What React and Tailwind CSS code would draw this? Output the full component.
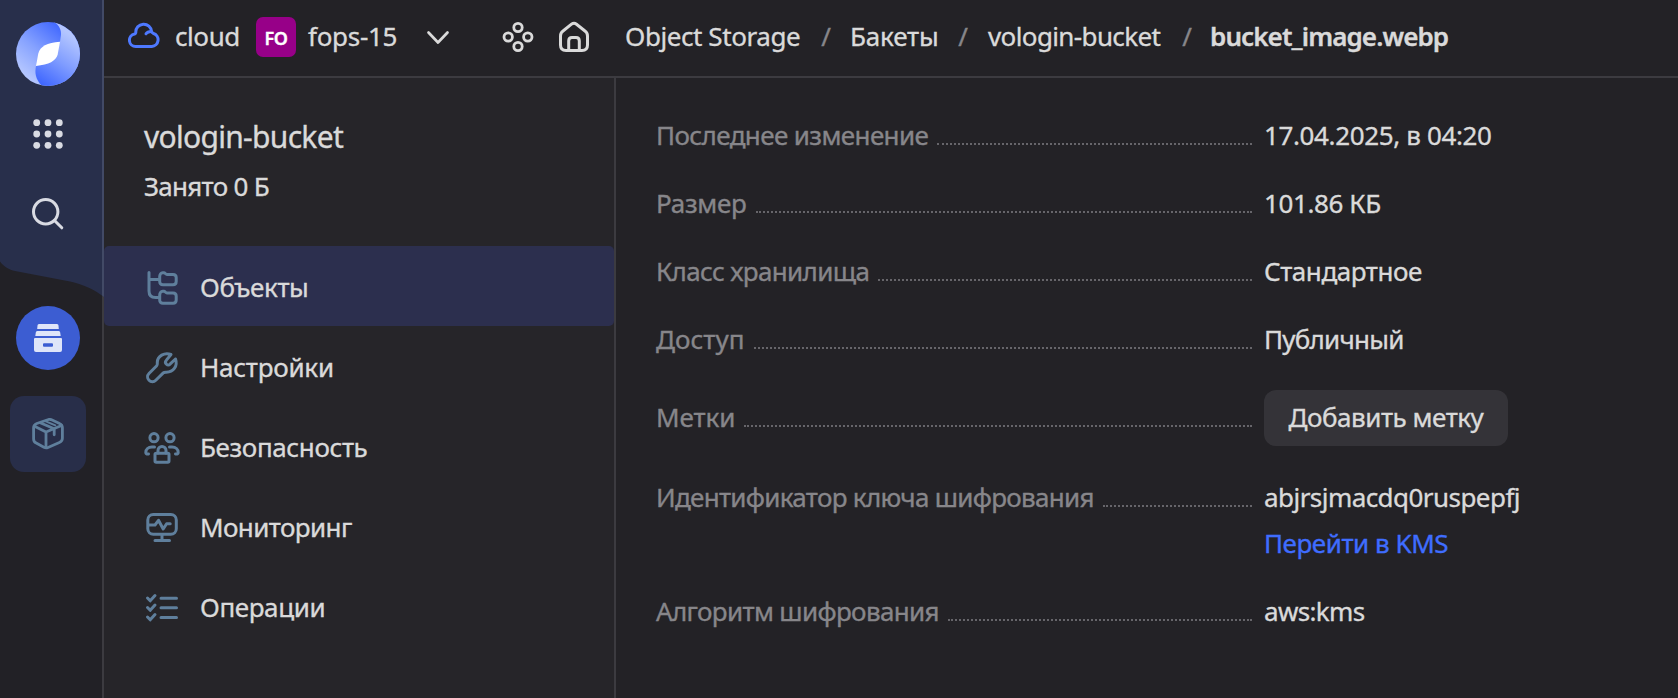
const stroke = {
  fill: 'none',
  stroke: 'currentColor',
  strokeWidth: 3,
  strokeLinecap: 'round',
  strokeLinejoin: 'round',
};

function MenuSvg({ children }) {
  return (
    <svg className="size-9 shrink-0 overflow-visible" viewBox="0 0 36 36" {...stroke}>
      {children}
    </svg>
  );
}

function TreeIcon() {
  return (
    <MenuSvg>
      <path d="M5 3.500v18.500c0 4.500 2 6.500 6.500 6.500h4M5 10.500h10.500" />
      <path d="M15.700 7.500c0-2 1.300-3.800 3-3.800h1.300c1 0 1.700 1.800 3 1.800h6c2 0 3.200 1.200 3.200 3v4c0 2-1.200 3.200-3.200 3.200h-10.100c-2 0-3.200-1.200-3.200-3.200z" />
      <path d="M15.700 26c0-2 1.300-3.800 3-3.800h1.300c1 0 1.700 1.800 3 1.800h6c2 0 3.200 1.200 3.200 3v4c0 2-1.200 3.200-3.200 3.200h-10.100c-2 0-3.200-1.200-3.200-3.200z" />
    </MenuSvg>
  );
}

function WrenchIcon() {
  return (
    <MenuSvg>
      <path d="M27 5.500C20.500 3 13.300 7 13.300 13.500c0 1.500.2 2.500-.6 3.300L5 24.500a4.800 4.800 0 0 0 6.800 6.800l7.500-7.400c.8-.8 1.500-.7 3-.7C29.500 23.200 34 17 31.500 10L26 15.200c-1 1-2.500 1-3.500 0s-1.400-2.600-.3-3.800z" />
    </MenuSvg>
  );
}

function TeamLockIcon() {
  return (
    <MenuSvg>
      <circle cx="10" cy="8.700" r="4.100" />
      <circle cx="26" cy="8.700" r="4.100" />
      <path d="M10.500 18h-2.500c-3.800 0-6.200 2.400-6.200 5.400 0 1.300.6 1.800 2.700 1.600" />
      <path d="M25.500 18h2.500c3.800 0 6.200 2.400 6.200 5.400 0 1.300-.6 1.800-2.700 1.600" />
      <rect x="11" y="24.300" width="14" height="9" rx="1.300" />
      <path d="M14 24v-2.500a4 4 0 0 1 8 0v2.500" />
    </MenuSvg>
  );
}

function MonitorIcon() {
  return (
    <MenuSvg>
      <rect x="3.800" y="5.500" width="28.500" height="19.700" rx="5.500" />
      <path d="M5 16h6l3.500-4.700 4.700 8.700 3.400-5.300h3.600M18 26v5M11 31.500h14.500" />
    </MenuSvg>
  );
}

function ChecklistIcon() {
  return (
    <MenuSvg>
      <path d="M3.500 9l2.700 2.800 4.800-5.300M3.500 18.500l2.700 2.800 4.800-5.300M3.500 28l2.700 2.800 4.800-5.300" />
      <path d="M17 9.300h15.500M17 18.800h15.500M17 28.400h15.500" />
    </MenuSvg>
  );
}

function Logo() {
  return (
    <svg className="size-16" viewBox="0 0 64 64">
      <defs>
        <linearGradient id="petalLeft" x1="6" y1="50" x2="44" y2="4" gradientUnits="userSpaceOnUse">
          <stop offset="0" stopColor="#b4c6ff" />
          <stop offset="0.45" stopColor="#86a2ff" />
          <stop offset="1" stopColor="#4168ff" />
        </linearGradient>
        <linearGradient id="petalRight" x1="56" y1="14" x2="24" y2="60" gradientUnits="userSpaceOnUse">
          <stop offset="0" stopColor="#b4c6ff" />
          <stop offset="0.5" stopColor="#7f9cff" />
          <stop offset="1" stopColor="#4168ff" />
        </linearGradient>
        <clipPath id="logoClip">
          <circle cx="32" cy="32" r="32" />
        </clipPath>
      </defs>
      <g clipPath="url(#logoClip)">
        <rect width="64" height="64" fill="url(#petalLeft)" />
        <path
          d="M38 0c5 3 7.500 8 7 13l-1 6.700L20 44c-1.300 6.500-.8 13 6 20h38V0z"
          fill="url(#petalRight)"
        />
        <path d="M44 19.700C31 20.500 24 24.500 22.300 31.500L20 44C33 42.500 40 39 41.700 32.500z" fill="#fff" />
      </g>
    </svg>
  );
}

function GridIcon() {
  const steps = [4.7, 16, 27.3];
  return (
    <svg className="size-8 text-[#d9dbe3]" viewBox="0 0 32 32" fill="currentColor">
      {steps.map((y) => steps.map((x) => <circle key={`${x}-${y}`} cx={x} cy={y} r="3.400" />))}
    </svg>
  );
}

function SearchIcon() {
  return (
    <svg className="size-8 text-[#d9dbe3]" viewBox="0 0 32 32" {...stroke}>
      <circle cx="13.700" cy="13.700" r="12.200" />
      <path d="M22.500 22.500l7.300 7.300" />
    </svg>
  );
}

function ArchiveIcon() {
  return (
    <svg className="size-8 text-[#dfe5f9]" viewBox="0 0 32 32" fill="currentColor">
      <path d="M7 2h18a1.500 1.500 0 0 1 1.500 1.500l.3 3.500H5.200l.3-3.500A1.500 1.500 0 0 1 7 2z" />
      <path d="M5.300 9h21.400a1.500 1.500 0 0 1 1.500 1.500l.5 3.500H3.300l.5-3.500A1.500 1.500 0 0 1 5.300 9z" />
      <path
        fillRule="evenodd"
        d="M3 16h26a1 1 0 0 1 1 1v11a2 2 0 0 1-2 2H4a2 2 0 0 1-2-2V17a1 1 0 0 1 1-1zM12 21.300a1 1 0 0 0-1 1v1.500a1 1 0 0 0 1 1h8a1 1 0 0 0 1-1v-1.500a1 1 0 0 0-1-1z"
      />
    </svg>
  );
}

function PackageIcon() {
  return (
    <svg className="size-8 text-[#5f7f9c]" viewBox="0 0 32 32" {...stroke} strokeWidth="2.800">
      <path d="M16.500 1.500l-11.700 4C2.700 6.300 1.600 7.600 1.600 9.700v11.300c0 2 .8 3.200 2.600 4.100l7.700 4.200c1.500.8 2.700.8 4.100.2l11.400-5c2-.8 3-2 3-4.200V9.800c0-2.100-1-3.400-2.900-4.200L19 1.600c-.9-.3-1.600-.4-2.500-.1z" />
      <path d="M2.500 8.200l11.500 5.800 15.500-6.500M14 14v15.500M8.800 5l13.400 5.800v6" />
      <path d="M13.800 3.300l9.500 4" strokeWidth="2" />
    </svg>
  );
}

function CloudIcon() {
  return (
    <svg className="-mt-[2px] size-8 shrink-0 text-[#4e79ff]" viewBox="0 0 16 16" {...stroke} strokeWidth="1.500">
      <path d="M3.900 13.250h8a3.350 3.350 0 0 0 .9-6.500c-.5-.2-.9-.5-1-1A3.850 3.850 0 0 0 3.900 6.300c-.1.500-.3.600-.6.700a3.150 3.150 0 0 0 .6 6.250z" />
      <path d="M9 6.900c.5-.8 1.300-1.200 2.600-1.200" />
    </svg>
  );
}

function ServicesIcon() {
  return (
    <svg className="size-8 shrink-0" viewBox="0 0 32 32" {...stroke} strokeWidth="2.800">
      <circle cx="16" cy="6.500" r="4.200" />
      <circle cx="6.200" cy="16" r="4.200" />
      <circle cx="25.800" cy="16" r="4.200" />
      <circle cx="16" cy="25.500" r="4.200" />
    </svg>
  );
}

function HomeIcon() {
  return (
    <svg className="size-8 shrink-0" viewBox="0 0 32 32" {...stroke}>
      <path d="M2.500 15c0-2.200.7-3.700 2.500-5l8.500-6.800c1.700-1.300 3.300-1.300 5 0l8.500 6.800c1.800 1.300 2.500 2.800 2.500 5v9c0 3.500-2 5.500-5.500 5.500H8c-3.500 0-5.500-2-5.500-5.500z" />
      <path d="M10.700 29V20c0-2.200 1.200-3.400 3.300-3.400h4c2.100 0 3.300 1.200 3.300 3.400V29" />
    </svg>
  );
}

function Sidebar() {
  return (
    <aside className="relative flex w-[104px] shrink-0 flex-col items-center border-r-2 border-[#3c3b40] bg-[#222126] pt-[14px] pr-1.5">
      <svg className="absolute top-0 left-0 h-[300px] w-[104px]" viewBox="0 0 104 300">
        <path d="M0 0h104v297c-9-7-20-12.500-34-15.500L15 271C9 269.500 4 267 0 261.500z" fill="#282f4b" />
        <path d="M102 0h2v297l-2-1.500z" fill="#424a66" />
      </svg>
      <div className="relative flex h-20 items-center"><Logo /></div>
      <div className="relative flex h-20 items-center"><GridIcon /></div>
      <div className="relative flex h-20 items-center"><SearchIcon /></div>
      <div className="mt-[52px] flex size-16 items-center justify-center rounded-full bg-[#3c5dd2]">
        <ArchiveIcon />
      </div>
      <div className="mt-[26px] flex size-[76px] items-center justify-center rounded-[14px] bg-[#282e49]">
        <PackageIcon />
      </div>
    </aside>
  );
}

function Slash() {
  return <span className="w-[10px] text-center text-[#87868a]">/</span>;
}

function Header() {
  return (
    <header className="flex h-[78px] shrink-0 items-center border-b-2 border-[#3c3b40] pb-[2px] pl-6 whitespace-nowrap">
      <CloudIcon />
      <span className="ml-[15px] w-[81px] pb-[2px] tracking-[-0.42px]">cloud</span>
      <span className="flex size-10 items-center justify-center rounded-[7px] bg-[#970088] pt-px text-[18px] font-semibold tracking-[-0.5px] text-white">FO</span>
      <span className="ml-3 w-[118px] pb-[2px] tracking-[-0.3px]">fops-15</span>
      <svg className="h-8 w-6 shrink-0" viewBox="0 0 24 32" {...stroke} strokeWidth="2.700">
        <path d="M2.500 11.500l9.500 10 9.500-10" />
      </svg>
      <span className="ml-[52px] flex"><ServicesIcon /></span>
      <span className="ml-6 flex"><HomeIcon /></span>
      <nav className="ml-[35px] flex pb-[2px]">
        <span className="w-[196px] tracking-[-0.42px]">Object Storage</span>
        <Slash />
        <span className="ml-[19px] w-[108px] tracking-[-0.17px]">Бакеты</span>
        <Slash />
        <span className="ml-5 w-[194px] tracking-[-0.62px]">vologin-bucket</span>
        <Slash />
        <span className="ml-[18px] font-semibold tracking-[-0.9px]">bucket_image.webp</span>
      </nav>
    </header>
  );
}

const menu = [
  { label: 'Объекты', icon: TreeIcon, track: 'tracking-[-0.4px]', active: true },
  { label: 'Настройки', icon: WrenchIcon, track: 'tracking-[-0.25px]' },
  { label: 'Безопасность', icon: TeamLockIcon, track: 'tracking-[-0.38px]' },
  { label: 'Мониторинг', icon: MonitorIcon, track: 'tracking-[-0.6px]' },
  { label: 'Операции', icon: ChecklistIcon, track: 'tracking-[-0.4px]' },
];

function BucketPanel() {
  return (
    <section className="w-[512px] shrink-0 border-r-2 border-[#3c3b40] bg-[#262529]">
      <div className="h-[168px] pt-9 pl-10">
        <h1 className="text-[30px] leading-[46px] tracking-[-0.7px]">vologin-bucket</h1>
        <p className="mt-2 tracking-[-0.7px]">Занято 0 Б</p>
      </div>
      <ul>
        {menu.map(({ label, icon: Icon, track, active }) => (
          <li
            key={label}
            className={`flex h-20 items-center rounded-[5px] pt-[2px] pl-10 ${active ? 'bg-[#2c2f4e]' : ''}`}
          >
            <span className="flex text-[#5f7f9c]"><Icon /></span>
            <span className={`ml-5 pb-px ${track}`}>{label}</span>
          </li>
        ))}
      </ul>
    </section>
  );
}

function Row({ label, track, className = '', labelClassName = '', children }) {
  return (
    <div className={`flex items-start ${className}`}>
      <dt className={`flex w-[596px] shrink-0 whitespace-nowrap text-[#87868a] ${labelClassName}`}>
        <span className={track}>{label}</span>
        <span className="mb-2 ml-[9px] grow border-b-2 border-dotted border-[#66656a]" />
      </dt>
      <dd className="ml-3">{children}</dd>
    </div>
  );
}

function Details() {
  return (
    <dl className="flex grow flex-col gap-8 pt-[39px] pl-10">
      <Row label="Последнее изменение" track="tracking-[-0.6px]">
        <span className="tracking-[-0.37px]">17.04.2025, в 04:20</span>
      </Row>
      <Row label="Размер" track="tracking-[-0.3px]">
        <span className="tracking-[-0.4px]">101.86 КБ</span>
      </Row>
      <Row label="Класс хранилища" track="tracking-[-0.65px]">
        <span className="tracking-[-0.44px]">Стандартное</span>
      </Row>
      <Row label="Доступ" track="tracking-[0.05px]">
        <span className="tracking-[-0.75px]">Публичный</span>
      </Row>
      <Row label="Метки" track="tracking-[-0.1px]" className="h-[58px] pt-px" labelClassName="pt-[9px]">
        <button className="h-14 w-[244px] rounded-xl bg-[#343338] pb-[2px] tracking-[-0.47px]">Добавить метку</button>
      </Row>
      <Row label="Идентификатор ключа шифрования" track="tracking-[-0.7px]">
        <div className="flex flex-col gap-[10px]">
          <span className="tracking-[-0.55px]">abjrsjmacdq0ruspepfj</span>
          <a className="tracking-[-0.45px] text-[#3f6dff]">Перейти в KMS</a>
        </div>
      </Row>
      <Row label="Алгоритм шифрования" track="tracking-[-0.65px]">
        <span className="tracking-[-0.65px]">aws:kms</span>
      </Row>
    </dl>
  );
}

export default function App() {
  return (
    <div className="flex h-[698px] w-[1678px] overflow-hidden bg-[#232226] font-['Noto_Sans','Open_Sans',sans-serif] text-[26px] leading-9 text-[#dadada] [-webkit-text-stroke:0.35px]">
      <Sidebar />
      <div className="flex grow flex-col">
        <Header />
        <main className="flex grow">
          <BucketPanel />
          <Details />
        </main>
      </div>
    </div>
  );
}
